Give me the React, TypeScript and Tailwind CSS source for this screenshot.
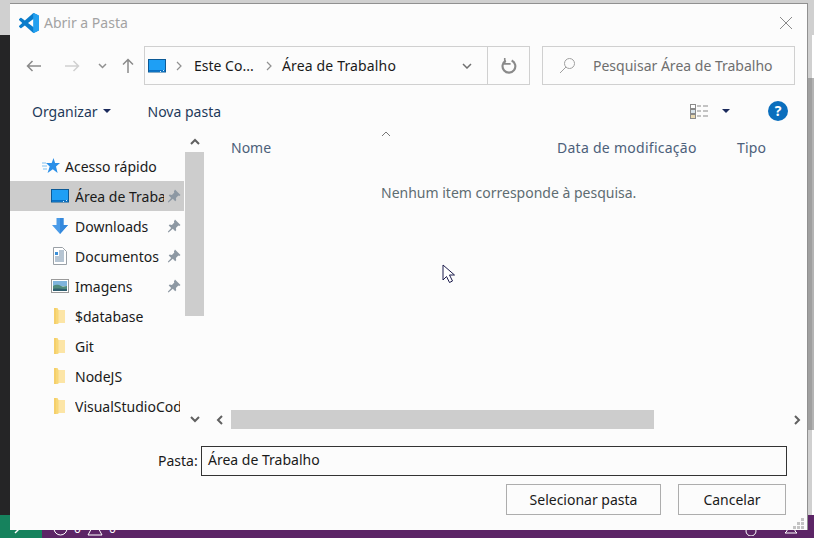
import React from "react";

const Folder = () => (
  <svg width="18" height="18" viewBox="0 0 18 18" className="shrink-0">
    <path d="M3 1h3.500l1 2H14v13H8l-1.500 1H3z" fill="#f8d878" />
    <path d="M7.500 3H14v13H7.500z" fill="#fce5a6" />
    <path d="M3 1h2v16H3z" fill="#f5cf6a" />
  </svg>
);
const Desktop = ({ className = "" }: { className?: string }) => (
  <svg width="18" height="14" viewBox="0 0 18 14" className={"shrink-0 " + className}>
    <rect x="0.500" y="0.500" width="17" height="12.500" fill="#1e9ff5" stroke="#0c5a96" />
    <path d="M1 11h16v1.500H1z" fill="#0a6fc2" />
    <path d="M12 12h1v1h-1zM15 11h1v1h-1z" fill="#d8eefc" />
  </svg>
);
const Pin = () => (
  <svg width="14" height="14" viewBox="0 0 14 14" className="shrink-0">
    <path d="M8 0.500l5.500 5.500-1.200 1-1-.4-2.400 2.400.3 2.200-1 1-2.400-2.400L1.500 13.500 0.800 12.800l3.400-3.800L1.700 6.600l1-1 2.200.300 2.400-2.400-.4-1z" fill="#8d98a3" />
  </svg>
);
const Star = () => (
  <svg width="18" height="16" viewBox="0 0 18 16" className="shrink-0">
    <path d="M11.500 0l1.600 5.100H18l-4 3.300L15.600 15 10.800 11.300 5.600 15l2.100-6.400L4 5.100h5.700z" fill="#2a8fe8" />
    <path d="M0 5h4M0 8h5M1 11h4" stroke="#7cc0f2" strokeWidth="1" />
  </svg>
);
const Down = () => (
  <svg width="18" height="18" viewBox="0 0 18 18" className="shrink-0">
    <path d="M5.500 1h7v7h4.500l-8 9-8-9h4.500z" fill="#4a9be8" />
    <path d="M9 1h3.500v7h4.500l-8 9z" fill="#3488dc" />
  </svg>
);
const Doc = () => (
  <svg width="18" height="18" viewBox="0 0 18 18" className="shrink-0">
    <path d="M2.500 0.500h9l4 4v13h-13z" fill="#fff" stroke="#9aa0a6" />
    <path d="M4 5h3v3H4z" fill="#3a8fd8" />
    <path d="M8 4h5M8 6h5M8 8h5M4 10h9M4 12h9M4 14h9" stroke="#6c8aa6" strokeWidth="1" />
  </svg>
);
const Pic = () => (
  <svg width="18" height="14" viewBox="0 0 18 14" className="shrink-0">
    <rect x="0.500" y="0.500" width="17" height="13" fill="#fff" stroke="#9a9a9a" />
    <rect x="2" y="2" width="14" height="5" fill="#7fb4dc" />
    <path d="M2 7c3-2 6-1 8 0s4 0 6 0v5H2z" fill="#4f8a7c" />
    <path d="M2 10c4-1 8 0 14 0v2H2z" fill="#2f5f6f" />
  </svg>
);
const Chev = ({ d, w = 10, color = "#606060" }: { d: string; w?: number; color?: string }) => (
  <svg width={w} height={w} viewBox="0 0 10 10" className="shrink-0">
    <path d={d} fill="none" stroke={color} strokeWidth="2" />
  </svg>
);
const Tri = () => (
  <svg width="8" height="4" viewBox="0 0 8 4" className="shrink-0">
    <path d="M0 0h8L4 4z" fill="#1b2a5c" />
  </svg>
);

const rows = [
  { label: "Área de Trabalho", icon: <Desktop />, pin: true, sel: true },
  { label: "Downloads", icon: <Down />, pin: true },
  { label: "Documentos", icon: <Doc />, pin: true },
  { label: "Imagens", icon: <Pic />, pin: true },
  { label: "$database", icon: <Folder /> },
  { label: "Git", icon: <Folder /> },
  { label: "NodeJS", icon: <Folder /> },
  { label: "VisualStudioCode", icon: <Folder /> },
];

export default function App() {
  return (
    <div className="relative w-[814px] h-[538px] overflow-hidden bg-[#d0d0d0] font-['Noto_Sans',sans-serif] text-[14px] text-[#1a1a1a]">
      {/* desktop behind */}
      <div className="flex h-full">
        <div className="w-[10px] flex flex-col">
          <div className="h-[35px] bg-[#d0d0d0]" />
          <div className="flex-1 bg-[#252526]" />
          <div className="h-[23px] bg-[#16825d]" />
        </div>
        <div className="flex-1" />
        <div className="w-[7px] flex flex-col">
          <div className="h-[35px] bg-[#d0d0d0]" />
          <div className="h-[43px] flex"><div className="w-[5px] bg-[#d0d0d0]" /><div className="flex-1 bg-white" /></div>
          <div className="h-[352px] flex"><div className="w-[5px] bg-[#a0a0a0]" /><div className="flex-1 bg-[#b4b4b4]" /></div>
          <div className="h-[85px] flex"><div className="w-[5px] bg-[#d0d0d0]" /><div className="flex-1 bg-white" /></div>
          <div className="flex-1 bg-[#5c2566]" />
        </div>
      </div>
      {/* status bar */}
      <div className="absolute left-0 right-0 bottom-0 h-[23px] bg-[#5c2566] flex items-center pt-[3px] text-white text-[12px]">
        <div className="w-[42px] h-[23px] -mt-[3px] bg-[#16825d] flex items-center pl-[14px]">
          <svg width="8" height="14" viewBox="0 0 8 14"><path d="M6 8L1 13" stroke="#fff" strokeWidth="1.500" /></svg>
        </div>
        <svg width="15" height="15" viewBox="0 0 15 15" className="ml-[11px]"><circle cx="7.500" cy="7.500" r="6.500" fill="none" stroke="#fff" /></svg>
        <span className="ml-[6px] w-[14px] mt-[2px]">0</span>
        <svg width="16" height="15" viewBox="0 0 16 15" className="-ml-[1px]"><path d="M8 1l7 13H1z" fill="none" stroke="#fff" /></svg>
        <span className="ml-[6px] mt-[2px]">0</span>
        <div className="flex-1" />
        <svg width="12" height="15" viewBox="0 0 12 15"><circle cx="6" cy="10" r="5" fill="none" stroke="#fff" /></svg>
        <svg width="14" height="15" viewBox="0 0 14 15" className="ml-[27px] mr-[16px]"><path d="M3 3h8v7l2 2H1l2-2z" fill="none" stroke="#fff" /></svg>
      </div>

      {/* dialog window */}
      <div className="absolute left-[10px] top-[3px] w-[798px] h-[527px] bg-[#fcfcfc] border-t border-r border-[#909090] flex flex-col">
        {/* title */}
        <div className="h-[42px] shrink-0 flex items-center pl-[9px] pr-[15px] pb-[5px]">
          <svg width="20" height="20" viewBox="0 0 24 24" className="shrink-0">
            <defs>
              <clipPath id="vsr"><rect x="17" y="0" width="7" height="24" /></clipPath>
            </defs>
            <path fill="#0a7ccb" d="M23.15 2.587L18.21.21a1.494 1.494 0 0 0-1.705.29l-9.46 8.63-4.12-3.128a.999.999 0 0 0-1.276.057L.327 7.261A1 1 0 0 0 .326 8.74L3.899 12 .326 15.26a1 1 0 0 0 .001 1.479L1.65 17.94a.999.999 0 0 0 1.276.057l4.12-3.128 9.46 8.63a1.492 1.492 0 0 0 1.704.29l4.942-2.377A1.5 1.500 0 0 0 24 20.060V3.939a1.500 1.500 0 0 0-.85-1.352zm-5.146 14.861L10.826 12l7.178-5.448v10.896z" />
            <path fill="#22a0f0" clipPath="url(#vsr)" d="M23.15 2.587L18.21.21a1.494 1.494 0 0 0-1.705.29L16 1v22l.5.500a1.492 1.492 0 0 0 1.704.29l4.942-2.377A1.5 1.500 0 0 0 24 20.060V3.939a1.500 1.500 0 0 0-.85-1.352z" />
          </svg>
          <span className="ml-[5px] text-[#a3a3a3]">Abrir a Pasta</span>
          <div className="flex-1" />
          <svg width="12" height="12" viewBox="0 0 12 12"><path d="M0 0l12 12M12 0L0 12" stroke="#8a8a8a" strokeWidth="1" /></svg>
        </div>
        {/* nav row */}
        <div className="h-[39px] shrink-0 flex items-center">
          <div className="w-[134px] shrink-0 flex items-center pl-[16px]">
            <svg width="15" height="12" viewBox="0 0 15 12"><path d="M15 6H1.500M6.500 1L1.500 6l5 5" fill="none" stroke="#8a8a8a" strokeWidth="1.500" /></svg>
            <svg width="15" height="12" viewBox="0 0 15 12" className="ml-[24px]"><path d="M0 6h13.500M8.500 1l5 5-5 5" fill="none" stroke="#d0d0d0" strokeWidth="1.500" /></svg>
            <svg width="9" height="6" viewBox="0 0 9 6" className="ml-[18px]"><path d="M1 1l3.500 3.500L8 1" fill="none" stroke="#909090" strokeWidth="1.500" /></svg>
            <svg width="12" height="15" viewBox="0 0 12 15" className="ml-[15px]"><path d="M6 15V1.500M1 6.500l5-5 5 5" fill="none" stroke="#8a8a8a" strokeWidth="1.500" /></svg>
          </div>
          <div className="w-[386px] h-[39px] shrink-0 border border-[#d0d0d0] flex items-center">
            <div className="flex-1 flex items-center pl-[3px]">
              <Desktop />
              <svg width="6" height="10" viewBox="0 0 6 10" className="ml-[10px]"><path d="M1 1l4 4-4 4" fill="none" stroke="#909090" strokeWidth="1.200" /></svg>
              <span className="ml-[12px] w-[72px]">Este Co...</span>
              <svg width="6" height="10" viewBox="0 0 6 10"><path d="M1 1l4 4-4 4" fill="none" stroke="#909090" strokeWidth="1.200" /></svg>
              <span className="ml-[10px] tracking-[0.15px]">Área de Trabalho</span>
              <div className="flex-1" />
              <svg width="10" height="6" viewBox="0 0 10 6" className="mr-[15px]"><path d="M1 1l4 4 4-4" fill="none" stroke="#707070" strokeWidth="1.500" /></svg>
            </div>
            <div className="w-[42px] h-full border-l border-[#d0d0d0] flex items-center justify-center">
              <svg width="16" height="16" viewBox="0 0 15 15"><path d="M10 2.300A6 6 0 1 1 4.500 2.500" fill="none" stroke="#8a8a8a" strokeWidth="2" /><path d="M3.500 0v5.500H9" fill="none" stroke="#8a8a8a" strokeWidth="1.500" /></svg>
            </div>
          </div>
          <div className="ml-[12px] w-[253px] h-[39px] shrink-0 border border-[#d0d0d0] flex items-center pl-[16px]">
            <svg width="17" height="17" viewBox="0 0 17 17"><circle cx="10.500" cy="6.500" r="5" fill="none" stroke="#a0a0a0" /><path d="M7 10l-6 6" stroke="#a0a0a0" /></svg>
            <span className="ml-[17px] text-[#6f6f6f]">Pesquisar Área de Trabalho</span>
          </div>
        </div>
        {/* toolbar */}
        <div className="h-[38px] mt-[7px] mb-[1px] shrink-0 flex items-center pl-[22px] pr-[19px] text-[#1f3a5a]">
          <span>Organizar</span>
          <span className="ml-[5px]"><Tri /></span>
          <span className="ml-[37px]">Nova pasta</span>
          <div className="flex-1" />
          <svg width="18" height="15" viewBox="0 0 18 15">
            <rect x="0.500" y="0.500" width="5" height="4" fill="#fff" stroke="#8a8a8a" /><rect x="0.500" y="5.500" width="5" height="4" fill="#d8e4ec" stroke="#8a8a8a" /><rect x="0.500" y="10.500" width="5" height="4" fill="#e8d8b0" stroke="#8a8a8a" />
            <path d="M7 2h4M13 2h5M7 7h4M13 7h5M7 12h4M13 12h5" stroke="#8a8a8a" />
          </svg>
          <span className="ml-[14px]"><Tri /></span>
          <div className="ml-[38px] w-[20px] h-[20px] rounded-full bg-[#0a6ebd] text-white flex items-center justify-center font-bold text-[14px] leading-none">?</div>
        </div>
        {/* main */}
        <div className="h-[299px] shrink-0 flex">
          <div className="w-[175px] shrink-0 pt-[20px] overflow-hidden">
            <div className="h-[30px] flex items-center pl-[32px] pr-[1px]">
              <Star />
              <span className="ml-[5px] text-[#1a1a1a]">Acesso rápido</span>
            </div>
            {rows.map((r) => (
              <div key={r.label} className={"h-[30px] w-[174px] flex items-center pl-[41px] " + (r.sel ? "bg-[#cccccc]" : "")}>
                {r.icon}
                <span className={"ml-[6px] whitespace-nowrap overflow-hidden " + (r.pin ? "w-[89px]" : "w-[105px]")}>{r.label}</span>
                {r.pin && <span className="ml-[3px]"><Pin /></span>}
              </div>
            ))}
          </div>
          <div className="w-[19px] shrink-0 flex flex-col">
            <div className="h-[21px] flex items-center justify-center"><Chev d="M1 7l4-4 4 4" /></div>
            <div className="h-[164px] bg-[#cdcdcd]" />
            <div className="flex-1" />
            <div className="h-[20px] mb-[1px] flex items-center justify-center"><Chev d="M1 3l4 4 4-4" /></div>
          </div>
          <div className="relative flex-1 flex flex-col">
            <div className="h-[32px] flex items-center text-[#4c607a]">
              <span className="ml-[27px] w-[326px]">Nome</span>
              <span className="w-[180px] tracking-[0.27px]">Data de modificação</span>
              <span className="tracking-[0.2px]">Tipo</span>
            </div>
            <svg width="10" height="6" viewBox="0 0 10 6" className="absolute left-[177px] top-0"><path d="M1 5l4-4 4 4" fill="none" stroke="#777777" /></svg>
            <div className="mt-[19px] ml-[177px] text-[#5e6c72]">Nenhum item corresponde à pesquisa.</div>
            <div className="flex-1" />
            <div className="h-[19px] mb-[1px] flex items-center">
              <div className="w-[27px] pl-[11px]"><Chev d="M7 1L3 5l4 4" /></div>
              <div className="w-[423px] h-full bg-[#cdcdcd]" />
              <div className="flex-1" />
              <div className="mr-[5px]"><Chev d="M3 1l4 4-4 4" /></div>
            </div>
            {/* pointer */}
            <svg width="14" height="20" viewBox="0 0 14 20" className="absolute left-[238px] top-[133px]">
              <path d="M1 1v15l3.500-3.500 3 6 3-1.500-3-6h5z" fill="#fff" stroke="#1c1c4c" />
            </svg>
          </div>
        </div>
        {/* bottom */}
        <div className="relative flex-1 flex flex-col">
          <div className="mt-[16px] flex items-center h-[30px] pl-[148px]">
            <span className="w-[43px] pb-[2px]">Pasta:</span>
            <div className="w-[586px] h-[30px] border border-[#333333] flex items-center pl-[6px] pb-[4px]">Área de Trabalho</div>
          </div>
          <div className="mt-[8px] flex pl-[496px]">
            <div className="w-[155px] h-[31px] border border-[#adadad] flex items-center justify-center">Selecionar pasta</div>
            <div className="ml-[17px] w-[108px] h-[31px] border border-[#adadad] flex items-center justify-center">Cancelar</div>
          </div>
          <svg width="12" height="12" viewBox="0 0 12 12" className="absolute right-[2px] bottom-0">
            <path d="M8 0h3v3H8zM4 4h3v3H4zM8 4h3v3H8zM0 8h3v3H0zM4 8h3v3H4zM8 8h3v3H8z" fill="#c4c4c4" />
          </svg>
        </div>
      </div>
    </div>
  );
}
